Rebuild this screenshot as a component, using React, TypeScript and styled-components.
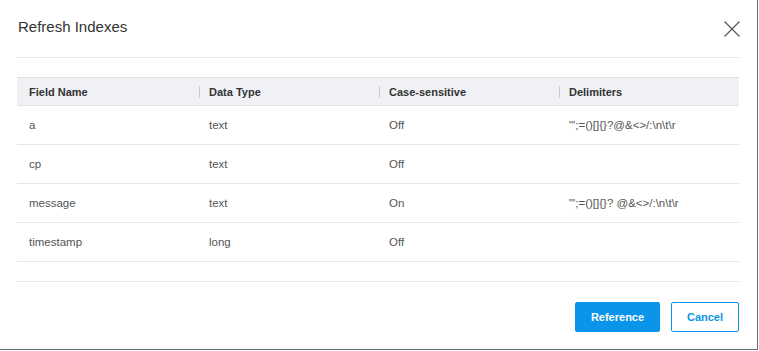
import { FC } from "react";
import styled, { createGlobalStyle } from "styled-components";

type IndexField = {
  name: string;
  dataType: string;
  caseSensitive: boolean;
  delimiters?: string;
};

const fields: IndexField[] = [
  { name: "a", dataType: "text", caseSensitive: false, delimiters: "\"';=()[]{}?@&<>/:\\n\\t\\r" },
  { name: "cp", dataType: "text", caseSensitive: false },
  { name: "message", dataType: "text", caseSensitive: true, delimiters: "\"';=()[]{}? @&<>/:\\n\\t\\r" },
  { name: "timestamp", dataType: "long", caseSensitive: false },
];

const columns = ["Field Name", "Data Type", "Case-sensitive", "Delimiters"];

const CloseIcon: FC = () => (
  <svg width="16" height="16" viewBox="0 0 16 16" fill="none">
    <path d="M0.5 0.5L15.5 15.5M15.5 0.5L0.5 15.5" stroke="#5a5a5a" strokeWidth="1.3" />
  </svg>
);

const App: FC = () => {
  return (
    <>
      <GlobalStyle />
      <Modal>
        <Header>
          <Title>Refresh Indexes</Title>
          <CloseButton aria-label="Close">
            <CloseIcon />
          </CloseButton>
        </Header>
        <Body>
          <Table>
            <HeadRow>
              {columns.map((col, i) => (
                <HeadCell key={col} withDivider={i > 0}>
                  {col}
                </HeadCell>
              ))}
            </HeadRow>
            {fields.map((f) => (
              <Row key={f.name}>
                <Cell>{f.name}</Cell>
                <Cell>{f.dataType}</Cell>
                <Cell>{f.caseSensitive ? "On" : "Off"}</Cell>
                <Cell>{f.delimiters ?? ""}</Cell>
              </Row>
            ))}
          </Table>
        </Body>
        <Footer>
          <Button primary width={85}>Reference</Button>
          <Button width={68}>Cancel</Button>
        </Footer>
      </Modal>
    </>
  );
};

export default App;

const GlobalStyle = createGlobalStyle`
  html, body {
    margin: 0;
    padding: 0;
    background: #ffffff;
  }
  body {
    font-family: "Liberation Sans", Arial, sans-serif;
    color: #333;
  }
`;

const Modal = styled.div`
  width: 758px;
  height: 350px;
  box-sizing: border-box;
  padding: 0 18px 0 17px;
  background: #fff;
  border-right: 1px solid #6b6b6b;
  border-bottom: 1px solid #6b6b6b;
  display: flex;
  flex-direction: column;
`;

const Header = styled.div`
  height: 57px;
  border-bottom: 1px solid #e6e6e6;
  display: flex;
  justify-content: space-between;
  align-items: flex-start;
`;

const Title = styled.div`
  margin-top: 18px;
  margin-left: 1px;
  font-size: 15px;
  line-height: 18px;
  color: #333;
`;

const CloseButton = styled.button`
  margin-top: 21px;
  margin-right: -1px;
  padding: 0;
  border: none;
  background: none;
  width: 16px;
  height: 16px;
  display: flex;
  cursor: pointer;
`;

const Body = styled.div`
  padding: 19px 0 19px;
  border-bottom: 1px solid #e6e6e6;
`;

const Table = styled.div`
  display: flex;
  flex-direction: column;
`;

const gridColumns = "180px 180px 180px 1fr";

const HeadRow = styled.div`
  display: grid;
  grid-template-columns: ${gridColumns};
  height: 27px;
  background: #f0f1f5;
  border-top: 1px solid #dedfe3;
  border-bottom: 1px solid #e3e4e8;
`;

type HeadCellProps = {
  withDivider: boolean;
};

const HeadCell = styled.div<HeadCellProps>`
  position: relative;
  display: flex;
  align-items: center;
  padding-left: 12px;
  font-size: 11px;
  font-weight: bold;
  color: #333;
  ${({ withDivider }) =>
    withDivider
      ? `&::before {
    content: "";
    position: absolute;
    left: 2px;
    top: 8px;
    height: 12px;
    width: 1px;
    background: #c9c9cc;
  }`
      : ""}
`;

const Row = styled.div`
  display: grid;
  grid-template-columns: ${gridColumns};
  height: 38px;
  border-bottom: 1px solid #e6e6e6;
`;

const Cell = styled.div`
  display: flex;
  align-items: center;
  padding-left: 12px;
  font-size: 11.5px;
  color: #555;
  white-space: nowrap;
`;

const Footer = styled.div`
  display: flex;
  justify-content: flex-end;
  gap: 11px;
  padding-top: 20px;
`;

type ButtonProps = {
  primary?: boolean;
  width: number;
};

const Button = styled.button<ButtonProps>`
  height: 30px;
  width: ${({ width }) => width}px;
  padding: 0;
  box-sizing: border-box;
  border-radius: 2px;
  font-family: "Liberation Sans", Arial, sans-serif;
  font-size: 11px;
  font-weight: bold;
  cursor: pointer;
  border: 1px solid #0a94ea;
  background: ${({ primary }) => (primary ? "#0a94ea" : "#fff")};
  color: ${({ primary }) => (primary ? "#fff" : "#0a94ea")};
`;
